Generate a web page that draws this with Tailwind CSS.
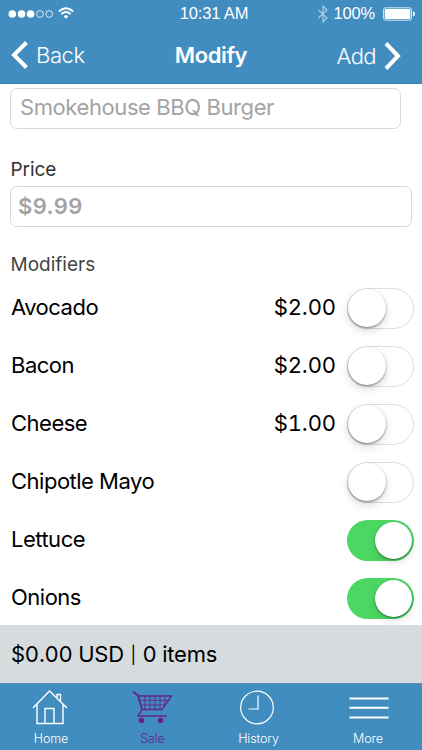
<!DOCTYPE html>
<html lang="en">
<head>
<meta charset="utf-8">
<title>Modify</title>
<script src="https://cdn.jsdelivr.net/npm/@tailwindcss/browser@4"></script>
</head>
<body class="w-[422px] h-[750px] overflow-hidden bg-white font-['Inter','Liberation_Sans',sans-serif] text-black">
<div class="flex flex-col h-[750px]">
  <header class="h-[84px] shrink-0 bg-[#418dbf] text-white border-b border-[#3580b2]">
    <div class="grid grid-cols-[1fr_80px_1fr] items-center h-[27px] font-['Liberation_Sans',sans-serif] text-[16.5px] tracking-[-0.15px]">
      <div class="flex items-center pl-2">
        <svg class="w-[68px] h-[20px]" viewBox="0 0 68 20" fill="none" stroke="white">
          <g fill="white" stroke="none"><circle cx="4.3" cy="10" r="3.8"/><circle cx="13.6" cy="10" r="3.8"/><circle cx="22.6" cy="10" r="3.8"/></g>
          <circle cx="32" cy="10" r="3.4" stroke-width=".8"/><circle cx="41.2" cy="10" r="3.4" stroke-width=".8"/>
          <path d="M50.8 7.7Q58 .8 65.2 7.7M53.3 10.2Q58 5.8 62.7 10.2" stroke-width="1.8"/>
          <path d="M55.5 12.2Q58 10.2 60.5 12.2L58 14.8Z" fill="white" stroke="none"/>
        </svg>
      </div>
      <div class="text-center whitespace-nowrap pl-[6px]">10:31 AM</div>
      <div class="flex items-center justify-end pr-[7px]">
        <svg class="w-[10px] h-[18px] mr-[5px] opacity-60" viewBox="0 0 10 18" fill="none" stroke="white" stroke-width="1.1"><path d="M.5 5 9 13 5 17V1L9 5 .5 13"/></svg>
        <span class="mr-[8px]">100%</span>
        <svg class="w-[32px] h-[14px]" viewBox="0 0 32 14"><rect x=".5" y=".8" width="28" height="12.4" rx="2" fill="none" stroke="white" stroke-width=".8"/><rect x="1.7" y="2" width="25.6" height="10" rx="1" fill="white"/><path d="M30 4.6Q32 5 32 7T30 9.4Z" fill="white"/></svg>
      </div>
    </div>
    <div class="grid grid-cols-3 items-center h-[56px] text-[22px]">
      <div class="flex items-center pl-[11px]">
        <svg class="w-[17px] h-[28px] mr-2" viewBox="0 0 17 28" fill="none" stroke="white" stroke-width="4"><path d="M15.5 1.5 3 14l12.500 12.500"/></svg>
        <span class="font-light tracking-[-0.4px]">Back</span>
      </div>
      <h1 class="text-center font-semibold tracking-[-0.4px]">Modify</h1>
      <div class="flex items-center justify-end pr-[21px] pt-[3px]">
        <span class="font-light tracking-[-0.6px] mr-[8px]">Add</span>
        <svg class="w-[17px] h-[28px] mt-[-1px]" viewBox="0 0 17 28" fill="none" stroke="white" stroke-width="4"><path d="M2 1.500 14 14 2 26.500"/></svg>
      </div>
    </div>
  </header>

  <main class="h-[541px] shrink-0 pt-[4px] overflow-hidden">
    <div class="ml-[10px] w-[391px] h-[41px] rounded-[7px] border border-[#d9d9d9] pl-[9px] flex items-center text-[22px] font-normal tracking-[-0.41px] text-[#a3a3a3] pb-[2px]">Smokehouse BBQ Burger</div>
    <div class="mt-[29px] h-[24px] leading-[24px] pl-[10.500px] text-[19px] font-normal tracking-[-0.1px] text-[#333]">Price</div>
    <div class="mt-[4px] ml-[10px] w-[402px] h-[41px] rounded-[7px] border border-[#d9d9d9] pl-[7px] flex items-center text-[22px] font-semibold text-[#a3a3a3] tracking-[0.4px]">$9.99</div>
    <div class="mt-[26px] h-[24px] leading-[24px] pl-[10.500px] text-[19px] font-normal tracking-[0px] text-[#444]">Modifiers</div>
    <ul class="mt-[2px] text-[22px] tracking-[-0.5px] font-normal">
      <li class="h-[58px] flex items-center pl-[11px] pr-[8px]"><span class="flex-1 pb-px">Avocado</span><span class="mr-[11px] pb-px tabular-nums tracking-[-0.1px]">$2.00</span><span class="w-[67px] h-[41px] rounded-full border-[1.5px] border-[#dedede] flex items-center"><i class="block w-[38px] h-[38px] shrink-0 rounded-full bg-white shadow-[0_1px_2px_rgba(0,0,0,0.45),0_4px_9px_rgba(0,0,0,0.15)]"></i></span></li>
      <li class="h-[58px] flex items-center pl-[11px] pr-[8px]"><span class="flex-1 pb-px">Bacon</span><span class="mr-[11px] pb-px tabular-nums tracking-[-0.1px]">$2.00</span><span class="w-[67px] h-[41px] rounded-full border-[1.5px] border-[#dedede] flex items-center"><i class="block w-[38px] h-[38px] shrink-0 rounded-full bg-white shadow-[0_1px_2px_rgba(0,0,0,0.45),0_4px_9px_rgba(0,0,0,0.15)]"></i></span></li>
      <li class="h-[58px] flex items-center pl-[11px] pr-[8px]"><span class="flex-1 pb-px">Cheese</span><span class="mr-[11px] pb-px tabular-nums tracking-[-0.1px]">$1.00</span><span class="w-[67px] h-[41px] rounded-full border-[1.5px] border-[#dedede] flex items-center"><i class="block w-[38px] h-[38px] shrink-0 rounded-full bg-white shadow-[0_1px_2px_rgba(0,0,0,0.45),0_4px_9px_rgba(0,0,0,0.15)]"></i></span></li>
      <li class="h-[58px] flex items-center pl-[11px] pr-[8px]"><span class="flex-1 pb-px">Chipotle Mayo</span><span class="w-[67px] h-[41px] rounded-full border-[1.5px] border-[#dedede] flex items-center"><i class="block w-[38px] h-[38px] shrink-0 rounded-full bg-white shadow-[0_1px_2px_rgba(0,0,0,0.45),0_4px_9px_rgba(0,0,0,0.15)]"></i></span></li>
      <li class="h-[58px] flex items-center pl-[11px] pr-[8px]"><span class="flex-1 pb-px">Lettuce</span><span class="w-[67px] h-[41px] rounded-full bg-[#4cd763] flex items-center justify-end pr-[2px]"><i class="block w-[37px] h-[37px] rounded-full bg-white shadow-[0_1px_2px_rgba(0,0,0,0.4),0_4px_9px_rgba(0,0,0,0.12)]"></i></span></li>
      <li class="h-[58px] flex items-center pl-[11px] pr-[8px]"><span class="flex-1 pb-px">Onions</span><span class="w-[67px] h-[41px] rounded-full bg-[#4cd763] flex items-center justify-end pr-[2px]"><i class="block w-[37px] h-[37px] rounded-full bg-white shadow-[0_1px_2px_rgba(0,0,0,0.4),0_4px_9px_rgba(0,0,0,0.12)]"></i></span></li>
    </ul>
  </main>

  <div class="h-[58px] shrink-0 bg-[#d6dbde] flex items-center pl-[11px] text-[22px] font-normal tracking-[-0.25px] tabular-nums whitespace-pre">$0.00 USD <span class="text-[17px] px-px pt-[3px]">|</span> 0 items</div>

  <nav class="h-[67px] shrink-0 bg-[#418dbf] text-white grid grid-cols-[102px_101px_111px_108px] border-t border-[#5f91b2] text-[12.5px] font-light tracking-[-0.1px]">
    <div class="flex flex-col items-center pt-[5px]">
      <svg class="w-[36px] h-[36px] ml-[-2px]" viewBox="0 0 36 36" fill="none" stroke="white" stroke-width="1.4"><path d="M1 19 17.500 2 35 19M5 15.500V34.500H31V15.500M13 34.500V19.500H22V34.500M25 9V5.500H28.500V12.500"/></svg>
      <span class="mt-[7px] leading-[14px]">Home</span>
    </div>
    <div class="flex flex-col items-center pt-[5px] text-[#66228f]">
      <svg class="w-[42px] h-[36px]" viewBox="0 0 42 36" fill="none" stroke="currentColor"><path d="M7 7H39.500L30 20.500H10L6 27H35" stroke-width="1.4"/><path d="M1 2.500 6 6.500 10 20.500" stroke-width="1.800"/><path d="M8 11.300H36.500M9 16H33.200M13 7V20.500M18 7V20.500M23 7V20.500M28 7V20.500M33 7V16" stroke-width=".9"/><circle cx="9.500" cy="31.500" r="2.800" fill="currentColor" stroke="none"/><circle cx="28.500" cy="31.500" r="2.800" fill="currentColor" stroke="none"/></svg>
      <span class="mt-[7px] leading-[14px]">Sale</span>
    </div>
    <div class="flex flex-col items-center pt-[5px]">
      <svg class="w-[36px] h-[36px] ml-[-3px]" viewBox="0 0 36 36" fill="none" stroke="white" stroke-width="1.200"><circle cx="18" cy="18.500" r="16.300"/><path d="M19 6.500V20H9.500"/></svg>
      <span class="mt-[7px] leading-[14px]">History</span>
    </div>
    <div class="flex flex-col items-center pt-[5px]">
      <svg class="w-[40px] h-[36px] ml-[2px]" viewBox="0 0 40 36" fill="none" stroke="white" stroke-width="1.900"><path d="M.5 9.500H39.500M.5 18.800H39.500M.5 28.500H39.500"/></svg>
      <span class="mt-[7px] leading-[14px]">More</span>
    </div>
  </nav>
</div>
</body>
</html>
